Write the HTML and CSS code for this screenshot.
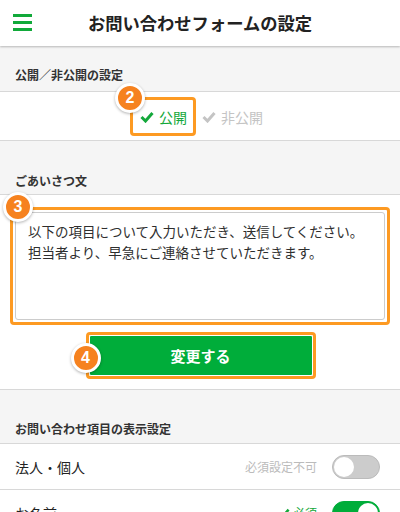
FILE: index.html
```html
<!DOCTYPE html>
<html lang="ja">
<head>
    <meta charset="utf-8">
    <title>お問い合わせフォームの設定</title>
    <link rel="stylesheet" href="styles.css">
</head>
<body>
    <header class="topbar">
        <div class="menu-btn">
            <span></span><span></span><span></span>
        </div>
        <h1>お問い合わせフォームの設定</h1>
        <div></div>
    </header>

    <div class="sec-head first">公開／非公開の設定</div>
    <div class="publish-row">
        <div class="mark-box pub-box">
            <span class="badge badge-2">2</span>
            <span class="opt on">
                <svg width="14" height="12" viewBox="0 0 14 12"><polyline points="1.5,6 5.5,10 12.5,2" fill="none" stroke="currentColor" stroke-width="3"/></svg>
                公開
            </span>
        </div>
        <span class="opt off">
            <svg width="14" height="12" viewBox="0 0 14 12"><polyline points="1.5,6 5.5,10 12.5,2" fill="none" stroke="currentColor" stroke-width="3"/></svg>
            非公開
        </span>
    </div>

    <div class="sec-head greet">ごあいさつ文</div>
    <div class="form-block">
        <div class="mark-box text-box">
            <span class="badge badge-3">3</span>
            <textarea class="greeting">以下の項目について入力いただき、送信してください。
担当者より、早急にご連絡させていただきます。</textarea>
        </div>
        <div class="mark-box btn-box">
            <span class="badge badge-4">4</span>
            <button type="button" class="submit">変更する</button>
        </div>
    </div>

    <div class="sec-head items">お問い合わせ項目の表示設定</div>
    <div class="item-row">
        <span class="item-name">法人・個人</span>
        <span class="item-note">必須設定不可</span>
        <span class="toggle"></span>
    </div>
    <div class="item-row">
        <span class="item-name">お名前</span>
        <span class="item-req">
            <svg width="12" height="10" viewBox="0 0 14 12"><polyline points="1.5,6 5.5,10 12.5,2" fill="none" stroke="currentColor" stroke-width="3"/></svg>
            必須
        </span>
        <span class="toggle active"></span>
    </div>
</body>
</html>
```

FILE: styles.css
```css
body {
    margin: 0;
    font-family: "Noto Sans CJK JP", "Noto Sans", sans-serif;
    background-color: #f5f5f5;
    color: #333;
    overflow: hidden;
}

.topbar {
    height: 46px;
    background-color: #fff;
    display: grid;
    grid-template-columns: 46px 1fr 46px;
    align-items: center;
    box-shadow: 0 1px 2px rgba(0, 0, 0, 0.25);
    position: relative;
    z-index: 2;
}

.topbar h1 {
    margin: 0;
    text-align: center;
    font-size: 17.3px;
    font-weight: 700;
    color: #222;
    line-height: 24px;
}

.menu-btn {
    display: flex;
    flex-direction: column;
    gap: 4px;
    padding-left: 13px;
    margin-top: -1px;
}

.menu-btn span {
    display: block;
    width: 19px;
    height: 3px;
    background-color: #11a93a;
}

.sec-head {
    display: flex;
    align-items: flex-end;
    padding: 0 15px;
    font-size: 12px;
    font-weight: 700;
    line-height: 16px;
    color: #333;
    border-bottom: 1px solid #d8d8d8;
}

.sec-head.first {
    height: 37px;
    padding-bottom: 8px;
}

.sec-head.greet {
    height: 48px;
    padding-bottom: 5px;
}

.sec-head.items {
    height: 47px;
    padding-bottom: 6px;
    border-top: 1px solid #d8d8d8;
}

.publish-row {
    height: 48px;
    background-color: #fff;
    border-bottom: 1px solid #d8d8d8;
    display: flex;
    align-items: flex-start;
    padding-left: 130px;
    gap: 6px;
}

.mark-box {
    position: relative;
    border: 3px solid #fd9a22;
    border-radius: 4px;
}

.pub-box {
    margin-top: 5px;
    height: 33px;
    padding: 0 6px 0 7px;
    display: flex;
    align-items: center;
}

.opt {
    display: flex;
    align-items: center;
    gap: 5px;
    font-size: 14px;
    line-height: 20px;
}

.opt.on {
    color: #14a83b;
}

.opt.off {
    color: #c4c4c4;
    height: 39px;
    margin-top: 5px;
}

.badge {
    position: absolute;
    width: 24px;
    height: 24px;
    border-radius: 50%;
    background-color: #f6821f;
    border: 3px solid #fff;
    box-shadow: 0 1px 3px rgba(0, 0, 0, 0.3);
    color: #fff;
    font-size: 16px;
    font-weight: 700;
    line-height: 24px;
    text-align: center;
    font-family: "Liberation Sans", sans-serif;
    z-index: 1;
}

.badge-2 {
    left: -18px;
    top: -17px;
}

.badge-3 {
    left: -10px;
    top: -18px;
}

.badge-4 {
    left: -18px;
    top: 8px;
}

.form-block {
    background-color: #fff;
    padding: 12px 10px 10px;
    display: flex;
    flex-direction: column;
    align-items: center;
    gap: 7px;
}

.text-box {
    width: 370px;
    padding: 2px;
}

.greeting {
    display: block;
    box-sizing: border-box;
    width: 100%;
    height: 108px;
    margin: 0;
    padding: 8px 12px;
    border: 1px solid #ccc;
    border-radius: 3px;
    font-family: "Noto Sans CJK JP", sans-serif;
    font-size: 13.5px;
    line-height: 21px;
    color: #2e2e2e;
    resize: none;
    outline: none;
}

.btn-box {
    width: 224px;
    margin-left: 1px;
}

.submit {
    display: block;
    width: 100%;
    height: 41px;
    border: 1px solid #fff;
    border-radius: 2px;
    background-color: #00ad3a;
    color: #fff;
    font-family: "Noto Sans CJK JP", sans-serif;
    font-size: 15px;
    font-weight: 700;
    cursor: pointer;
}

.item-row {
    height: 45px;
    background-color: #fff;
    border-bottom: 1px solid #d8d8d8;
    display: flex;
    align-items: center;
    padding: 0 20px 0 15px;
}

.item-name {
    flex: 1;
    font-size: 14px;
    color: #222;
}

.item-note {
    font-size: 12px;
    color: #bbb;
    margin-right: 15px;
}

.item-req {
    display: flex;
    align-items: center;
    gap: 3px;
    font-size: 12px;
    color: #14a83b;
    margin-right: 15px;
}

.toggle {
    position: relative;
    box-sizing: border-box;
    width: 48px;
    height: 24px;
    border-radius: 12px;
    background-color: #ccc;
    border: 1px solid #bbb;
}

.toggle::after {
    content: "";
    position: absolute;
    top: 1px;
    left: 1px;
    width: 20px;
    height: 20px;
    border-radius: 50%;
    background-color: #fff;
}

.toggle.active {
    background-color: #00ad3a;
    border-color: #00ad3a;
}

.toggle.active::after {
    left: auto;
    right: 1px;
}
```
